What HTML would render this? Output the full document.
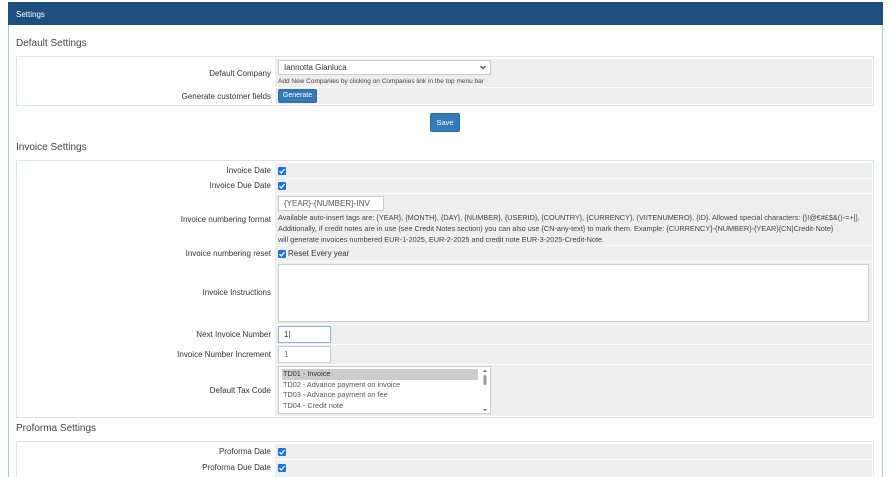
<!DOCTYPE html>
<html><head><meta charset="utf-8"><style>
*{box-sizing:border-box;margin:0;padding:0}
html,body{width:892px;height:477px;overflow:hidden}
body{background:#fff;font-family:"Liberation Sans",sans-serif;color:#333;position:relative;font-size:8px}
.a{position:absolute}
.panel{left:8px;top:2px;width:875px;height:475px;border-left:1px solid #a9c6e3;border-right:1px solid #a9c6e3}
.hdr{left:8px;top:2px;width:875px;height:23px;background:#1d4e7f;color:#fff;font-size:8px;padding:8px 0 0 8px}
.h{font-size:10px;color:#444;left:16px}
.tbl{left:16px;width:858px;border:1px solid #dde3e8;background:#fff}
.cell{left:275px;width:597px;background:#eee}
.lbl{right:621px;text-align:right;font-size:8px;color:#333;white-space:nowrap}
.cb{width:8px;height:8px;background:#1a73e8;border-radius:1px}
.cb svg{display:block}
.inp{background:#fff;border:1px solid #ccc;font-size:8px;color:#555;padding:0 5px}
.btn{background:#337ab7;color:#fff;border-radius:2px;text-align:center;border:1px solid #2e6da4}
</style></head><body>
<div class="a panel"></div>
<div class="a hdr">Settings</div>

<div class="a h" style="top:38px">Default Settings</div>
<div class="a tbl" style="top:56px;height:50px"></div>
<div class="a cell" style="top:59px;height:28px"></div>
<div class="a cell" style="top:88px;height:16px"></div>
<div class="a lbl" style="top:69px">Default Company</div>
<div class="a lbl" style="top:92px">Generate customer fields</div>
<div class="a inp" style="left:278px;top:60px;width:213px;height:15px;line-height:13px;color:#333">Iannotta Gianluca<svg class="a" style="right:4px;top:4px" width="6" height="5"><path d="M0.5 1 L3 3.5 L5.5 1" stroke="#333" stroke-width="1.2" fill="none"/></svg></div>
<div class="a" style="left:278px;top:78px;font-size:6.5px;color:#444">Add New Companies by clicking on Companies link in the top menu bar</div>
<div class="a btn" style="left:278px;top:89px;width:39px;height:14px;font-size:7px;line-height:12px">Generate</div>
<div class="a btn" style="left:430px;top:113px;width:30px;height:19px;font-size:7.5px;line-height:17px">Save</div>

<div class="a h" style="top:142px">Invoice Settings</div>
<div class="a tbl" style="top:160px;height:258px"></div>
<div class="a cell" style="top:163px;height:15px"></div>
<div class="a cell" style="top:179px;height:14px"></div>
<div class="a cell" style="top:194px;height:51px"></div>
<div class="a cell" style="top:246px;height:15px"></div>
<div class="a cell" style="top:262px;height:62px"></div>
<div class="a cell" style="top:325px;height:19px"></div>
<div class="a cell" style="top:345px;height:19px"></div>
<div class="a cell" style="top:365px;height:51px"></div>
<div class="a lbl" style="top:166px">Invoice Date</div>
<div class="a lbl" style="top:181px">Invoice Due Date</div>
<div class="a lbl" style="top:215px">Invoice numbering format</div>
<div class="a lbl" style="top:249px">Invoice numbering reset</div>
<div class="a lbl" style="top:288px">Invoice Instructions</div>
<div class="a lbl" style="top:330px">Next Invoice Number</div>
<div class="a lbl" style="top:350px">Invoice Number Increment</div>
<div class="a lbl" style="top:386px">Default Tax Code</div>
<div class="a cb" style="left:278px;top:167px"><svg width="8" height="8"><path d="M1.5 4.2 L3.3 6 L6.5 2" stroke="#fff" stroke-width="1.3" fill="none"/></svg></div>
<div class="a cb" style="left:278px;top:182px"><svg width="8" height="8"><path d="M1.5 4.2 L3.3 6 L6.5 2" stroke="#fff" stroke-width="1.3" fill="none"/></svg></div>
<div class="a inp" style="left:278px;top:196px;width:106px;height:15px;line-height:13px">{YEAR}-{NUMBER}-INV</div>
<div class="a" style="left:278px;top:212px;font-size:7.3px;line-height:11px;color:#444;white-space:nowrap">Available auto-insert tags are: {YEAR}, {MONTH}, {DAY}, {NUMBER}, {USERID}, {COUNTRY}, {CURRENCY}, {VIITENUMERO}, {ID}. Allowed special characters: {}!@€#£$&()-=+[].<br>Additionally, if credit notes are in use (see Credit Notes section) you can also use {CN-any-text} to mark them. Example: {CURRENCY}-{NUMBER}-{YEAR}{CN|Credit-Note}<br>will generate invoices numbered EUR-1-2025, EUR-2-2025 and credit note EUR-3-2025-Credit-Note.</div>
<div class="a cb" style="left:278px;top:250px"><svg width="8" height="8"><path d="M1.5 4.2 L3.3 6 L6.5 2" stroke="#fff" stroke-width="1.3" fill="none"/></svg></div>
<div class="a" style="left:288px;top:249px;font-size:8px">Reset Every year</div>
<div class="a inp" style="left:278px;top:264px;width:591px;height:58px"></div>
<div class="a inp" style="left:278px;top:326px;width:53px;height:17px;line-height:15px;border-color:#8ab4e0;color:#333">1|</div>
<div class="a inp" style="left:278px;top:346px;width:53px;height:17px;line-height:15px;color:#777">1</div>
<div class="a inp" style="left:278px;top:366px;width:213px;height:48px;padding:0"></div>
<div class="a" style="left:282px;top:369px;width:196px;height:11px;background:#ccc"></div>
<div class="a" style="left:283px;top:369px;font-size:7.3px;line-height:10.7px;color:#555"><span style="color:#333">TD01 - Invoice</span><br>TD02 - Advance payment on invoice<br>TD03 - Advance payment on fee<br>TD04 - Credit note</div>
<svg class="a" style="left:482px;top:368px" width="6" height="46"><path d="M1 4 L3 1.5 L5 4Z" fill="#777"/><rect x="1.5" y="7" width="3" height="10" rx="1.5" fill="#999"/><path d="M1 41 L3 43.5 L5 41Z" fill="#777"/></svg>

<div class="a h" style="top:423px">Proforma Settings</div>
<div class="a tbl" style="top:441px;height:36px;border-bottom:none"></div>
<div class="a cell" style="top:444px;height:15px"></div>
<div class="a cell" style="top:460px;height:17px"></div>
<div class="a lbl" style="top:447px">Proforma Date</div>
<div class="a lbl" style="top:463px">Proforma Due Date</div>
<div class="a cb" style="left:278px;top:448px"><svg width="8" height="8"><path d="M1.5 4.2 L3.3 6 L6.5 2" stroke="#fff" stroke-width="1.3" fill="none"/></svg></div>
<div class="a cb" style="left:278px;top:464px"><svg width="8" height="8"><path d="M1.5 4.2 L3.3 6 L6.5 2" stroke="#fff" stroke-width="1.3" fill="none"/></svg></div>
</body></html>
